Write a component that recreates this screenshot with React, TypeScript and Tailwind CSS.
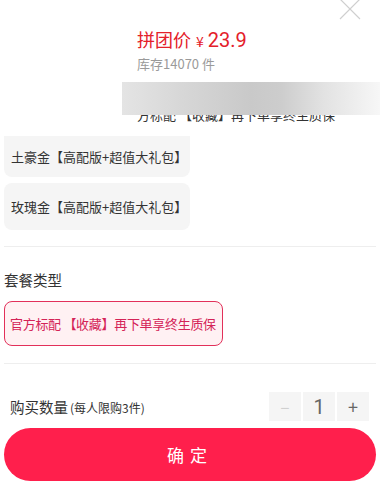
import { useState } from 'react'

const options = ['土豪金【高配版+超值大礼包】', '玫瑰金【高配版+超值大礼包】']

export default function App() {
  const [count, setCount] = useState(1)

  return (
    <div className="relative h-[499px] w-[380px] overflow-hidden bg-white font-['Noto_Sans_CJK_SC',sans-serif] text-[#333]">
      {/* close */}
      <button type="button" aria-label="关闭" className="absolute left-[339px] top-[-2px] h-[22px] w-[22px]">
        <svg viewBox="0 0 22 22" className="h-[22px] w-[22px]" fill="none" stroke="#cfcfcf" strokeWidth={1.2}>
          <path d="M1 1 L21 21 M21 1 L1 21" />
        </svg>
      </button>

      {/* price header */}
      <div className="pl-[137px] pt-[27px]">
        <div className="flex items-baseline leading-[24px] text-[#e4202a]">
          <span className="text-[18px]">拼团价</span>
          <span className="ml-[5px] text-[14px]">¥</span>
          <span className="ml-[4px] font-['Roboto',sans-serif] text-[20px]">23.9</span>
        </div>
        <p className="mt-[2px] text-[13px] leading-[18px] text-[#9a9a9a]">库存14070 件</p>
      </div>

      {/* selected spec, partly hidden under the blurred strip */}
      <p className="mt-[33px] pl-[137px] text-[13px] leading-[18px] text-[#333]">方标配 【收藏】再下单享终生质保</p>
      <div className="absolute left-[122px] right-0 top-[82px] h-[33px] bg-[linear-gradient(90deg,#e4e4e4_0%,#d6d6d6_25%,#c9c9c9_50%,#cdcdcd_62%,#e2e2e2_78%,#f7f7f7_100%)]" />

      <div className="px-[4px]">
        {/* color options */}
        <div className="mt-[12px] flex flex-col items-start gap-[6px]">
          <div className="flex h-[41px] w-[186px] items-center rounded-b-[8px] bg-[#f5f5f5] px-[7px] text-[13px]">
            {options[0]}
          </div>
          <div className="flex h-[47px] w-[186px] items-center rounded-[8px] bg-[#f5f5f5] px-[7px] text-[13px]">
            {options[1]}
          </div>
        </div>

        <div className="mt-[16px] h-px bg-[#eeeeee]" />

        {/* package type */}
        <p className="mt-[23px] text-[14.5px] leading-[20px] text-[#333]">套餐类型</p>
        <div className="mt-[11px] flex h-[45px] w-[219px] items-center whitespace-nowrap rounded-[8px] border-[1.5px] border-[#e2305a] bg-[#fff1f3] px-[5px] text-[13px] tracking-[-0.3px] text-[#d42357]">
          官方标配 【收藏】再下单享终生质保
        </div>

        <div className="mt-[17px] h-px bg-[#eeeeee]" />

        {/* quantity */}
        <div className="mt-[28px] flex items-center justify-between pl-[6px] pr-[7px]">
          <p className="leading-[20px]">
            <span className="text-[14.5px]">购买数量</span>
            <span className="ml-[2px] text-[12px]">(每人限购3件)</span>
          </p>
          <div className="flex gap-[2px]">
            <button
              type="button"
              onClick={() => setCount((c) => Math.max(1, c - 1))}
              className="flex h-[29px] w-[32px] items-center justify-center bg-[#f5f5f5] text-[16px] text-[#d0d0d0]"
            >
              −
            </button>
            <div className="flex h-[29px] w-[32px] items-center justify-center bg-[#f5f5f5] font-['Roboto',sans-serif] text-[20px] text-[#666]">
              {count}
            </div>
            <button
              type="button"
              onClick={() => setCount((c) => Math.min(3, c + 1))}
              className="flex h-[29px] w-[32px] items-center justify-center bg-[#f5f5f5] text-[18px] text-[#666]"
            >
              +
            </button>
          </div>
        </div>

        <button
          type="button"
          className="mt-[7px] flex h-[53px] w-full items-center justify-center rounded-full bg-[#ff1f4c] text-[17px] tracking-[6px] text-white"
        >
          确定
        </button>
      </div>
    </div>
  )
}
